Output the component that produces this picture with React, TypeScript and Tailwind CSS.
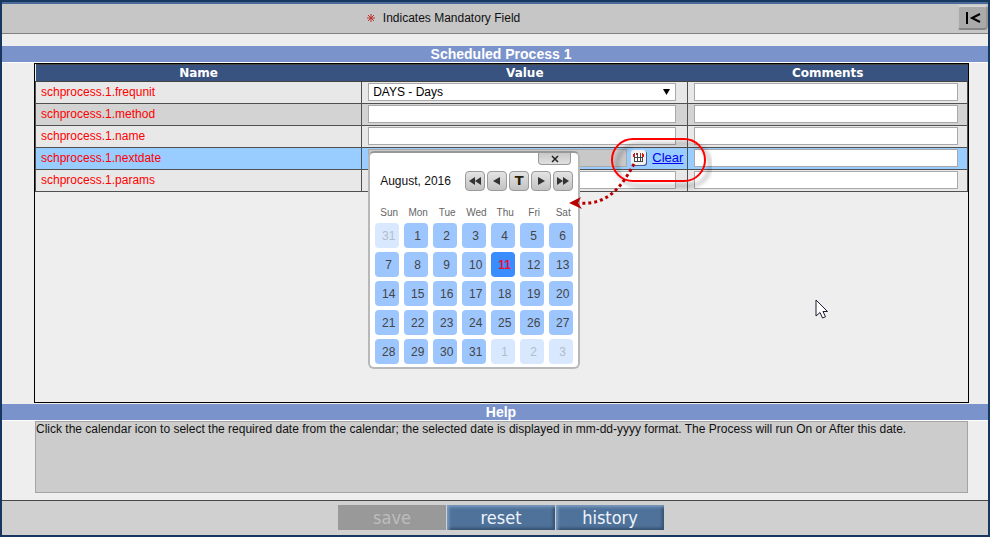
import { useState } from "react";

const rows = [
  { name: "schprocess.1.frequnit", type: "select", bg: "bg-[#e8e8e8]" },
  { name: "schprocess.1.method", type: "text", bg: "bg-[#d3d3d3]" },
  { name: "schprocess.1.name", type: "text", bg: "bg-[#e8e8e8]" },
  { name: "schprocess.1.nextdate", type: "date", bg: "bg-[#99ccff]" },
  { name: "schprocess.1.params", type: "text", bg: "bg-[#e8e8e8]" },
];

const weekdays = ["Sun", "Mon", "Tue", "Wed", "Thu", "Fri", "Sat"];

// August 2016, padded with the neighbouring months
const days = Array.from({ length: 35 }, (_, i) => {
  if (i === 0) return { key: i, day: 31, outside: true };
  if (i > 31) return { key: i, day: i - 31, outside: true };
  return { key: i, day: i, outside: false };
});

const field = "block h-[18px] w-full rounded-none border border-[#a9a9a9] bg-white px-1 text-xs text-black";
const navButton =
  "flex size-5 items-center justify-center rounded border border-[#9b9b9b] bg-linear-to-b from-[#e4e4e4] to-[#c2c2c2]";

function SectionTitle({ children }: { children: string }) {
  return (
    <h2 className="border-b border-white bg-[#7b93cb] pr-5 pl-8 text-center text-sm leading-4 font-bold text-white">
      {children}
    </h2>
  );
}

function CalendarIcon() {
  return (
    <svg viewBox="0 0 16 16" className="size-4">
      <rect x="1" y="1" width="15" height="15" rx="3" fill="#3f5f95" />
      <rect x="0" y="0" width="15" height="15" rx="3" fill="#f4f0f0" />
      <path d="M3 3h9v9H3z" fill="#fff" />
      <path d="M3.5 3v9M6.500 3v9M9.500 3v9M11.500 3v9M3 7.500h9M3 11.500h9" stroke="#444" fill="none" />
      <path d="M2 4h2v3H2zM5 3h1v2H5zM9 3h1v2H9zM11 4h2v3h-2z" fill="#d81818" />
    </svg>
  );
}

function Calendar() {
  const [selected, setSelected] = useState(11);

  return (
    <div
      role="dialog"
      aria-label="Select date"
      className="absolute top-[2px] left-0 z-10 w-[212px] rounded-md border-2 border-[#b8b8b8] border-t-[#989898] bg-white px-[5px] pb-[3px]"
    >
      <div className="flex justify-end pr-[2px]">
        <button
          type="button"
          aria-label="Close"
          className="flex h-3 w-[33px] items-center justify-center rounded-b border border-t-0 border-[#999] bg-linear-to-b from-[#c8c8c8] to-[#e0e0e0]"
        >
          <svg viewBox="0 0 8 8" className="size-2">
            <path d="M1 1l6 6M7 1L1 7" stroke="#222" strokeWidth="1.5" />
          </svg>
        </button>
      </div>

      <div className="mt-[6px] flex h-5 items-center justify-between pl-[5px]">
        <span className="text-xs text-[#111]">August, 2016</span>
        <div className="flex gap-[2px]">
          <button type="button" aria-label="Previous year" className={navButton}>
            <svg viewBox="0 0 14 10" className="h-[10px] w-[14px]" fill="#333">
              <path d="M7 1v8L1 5zM13 1v8L7 5z" />
            </svg>
          </button>
          <button type="button" aria-label="Previous month" className={navButton}>
            <svg viewBox="0 0 14 10" className="h-[10px] w-[14px]" fill="#333">
              <path d="M10 1v8L3 5z" />
            </svg>
          </button>
          <button type="button" aria-label="Today" className={navButton}>
            <span className="font-['DejaVu_Sans'] text-[13px] leading-4 font-bold text-[#2a2208]">T</span>
          </button>
          <button type="button" aria-label="Next month" className={navButton}>
            <svg viewBox="0 0 14 10" className="h-[10px] w-[14px]" fill="#333">
              <path d="M4 1v8l7-4z" />
            </svg>
          </button>
          <button type="button" aria-label="Next year" className={navButton}>
            <svg viewBox="0 0 14 10" className="h-[10px] w-[14px]" fill="#333">
              <path d="M1 1v8l6-4zM7 1v8l6-4z" />
            </svg>
          </button>
        </div>
      </div>

      <div className="mt-[15px] mb-[3px] grid grid-cols-7 gap-x-[5px] text-center text-[10px] leading-[14px] text-[#666]">
        {weekdays.map((w) => (
          <span key={w} className="pl-1">
            {w}
          </span>
        ))}
      </div>

      <div className="grid grid-cols-7 gap-x-[5px] gap-y-1">
        {days.map((d) => {
          let tone = "bg-[#9dc6ff] text-[#444]";
          if (d.outside) tone = "bg-[#d8e8ff] text-[#b4bcc8]";
          else if (d.day === selected) tone = "bg-[#3a8dff] font-bold text-[#f01030]";
          return (
            <button
              key={d.key}
              type="button"
              onClick={() => !d.outside && setSelected(d.day)}
              className={`h-[25px] rounded pl-[3px] text-center text-xs ${tone}`}
            >
              {d.day}
            </button>
          );
        })}
      </div>
    </div>
  );
}

// Callout ring round the date controls, with the dotted arrow to the calendar
function Callout() {
  return (
    <svg
      viewBox="0 0 150 86"
      className="pointer-events-none absolute -top-[19px] -right-[29px] z-20 h-[86px] w-[150px]"
      fill="none"
    >
      <defs>
        <filter id="ring-shadow" x="-20%" y="-20%" width="150%" height="160%">
          <feDropShadow dx="5" dy="5" stdDeviation="2" floodColor="#000" floodOpacity="0.4" />
        </filter>
      </defs>
      <rect x="50" y="9" width="93" height="42" rx="21" stroke="#ff0000" strokeWidth="2" filter="url(#ring-shadow)" />
      <path d="M72 34C62 52 48 76 17 73" stroke="#b80000" strokeWidth="3" strokeDasharray="3 3" />
      <path d="M7 73l12-6-3 6 4 6z" fill="#b80000" />
    </svg>
  );
}

function ValueField({ name, type }: { name: string; type: string }) {
  if (type === "select") {
    return (
      <div className="relative">
        <select aria-label={name} className={`${field} appearance-none`}>
          <option>DAYS - Days</option>
        </select>
        <svg viewBox="0 0 7 6" className="pointer-events-none absolute top-[6px] right-[6px] h-[6px] w-[7px]">
          <path d="M0 0h7L3.5 6z" fill="#000" />
        </svg>
      </div>
    );
  }
  if (type === "date") {
    return (
      <div className="relative -mr-[7px] flex h-[18px] items-center">
        <input
          aria-label={name}
          disabled
          className="h-[18px] min-w-0 flex-1 border border-[#a9a9a9] bg-[#c8c8c8] px-1 text-xs"
        />
        <button type="button" aria-label="Open calendar" className="mr-[5px] ml-1">
          <CalendarIcon />
        </button>
        <a href="#clear" className="text-[13px] text-[#0000ee] underline">
          Clear
        </a>
        <Calendar />
        <Callout />
      </div>
    );
  }
  return <input aria-label={name} type="text" className={field} />;
}

export default function App() {
  return (
    <div className="flex min-h-screen flex-col border-2 border-[#17375e] bg-[#eeeeee] font-['Liberation_Sans',Arial,sans-serif] text-xs text-black">
      <header className="flex h-8 items-center justify-between border-t-2 border-b border-t-[#4a6a9c] border-b-[#808080] bg-[#c6c6c6] pl-[37%]">
        <p className="flex items-center gap-2 pb-[2px] text-[#111]">
          <svg viewBox="0 0 8 8" className="size-2">
            <path d="M4 0v8M0 4h8M1 1l6 6M7 1L1 7" stroke="#c03028" />
          </svg>
          Indicates Mandatory Field
        </p>
        <button
          type="button"
          aria-label="Collapse"
          className="mt-px flex h-[25px] w-[31px] items-center justify-center self-start rounded border-2 border-t-[#d4d4d4] border-r-[#969696] border-b-[#858585] border-l-[#c4c4c4] bg-[#aaaaaa]"
        >
          <svg viewBox="0 0 16 14" className="h-[14px] w-4" fill="none" stroke="#000" strokeWidth="2">
            <path d="M2 1v12M15 3L7 7l8 4" />
          </svg>
        </button>
      </header>

      <main className="flex flex-1 flex-col pt-3">
        <SectionTitle>Scheduled Process 1</SectionTitle>

        <div className="relative mr-[19px] mb-px ml-8 flex-1 border border-black">
          <table className="w-full table-fixed border-collapse">
            <colgroup>
              <col className="w-[35%]" />
              <col className="w-[35%]" />
              <col className="w-[30%]" />
            </colgroup>
            <thead>
              <tr className="bg-[#38537f] font-['DejaVu_Sans',Verdana,sans-serif] text-xs leading-4 text-white">
                <th className="border-y border-[#444] p-0">Name</th>
                <th className="border-y border-[#444] p-0">Value</th>
                <th className="border-y border-[#444] p-0">Comments</th>
              </tr>
            </thead>
            <tbody>
              {rows.map((row) => (
                <tr key={row.name} className={row.bg}>
                  <td className="border border-[#505050] pt-0 pb-[2px] pl-[5px] leading-4 text-[#ff0000]">{row.name}</td>
                  <td className="border border-[#505050] pt-px pr-[11px] pb-[2px] pl-[6px]">
                    <ValueField name={row.name} type={row.type} />
                  </td>
                  <td className="border border-[#505050] pt-px pr-[9px] pb-[2px] pl-[6px]">
                    <input aria-label={`${row.name} comments`} type="text" className={field} />
                  </td>
                </tr>
              ))}
            </tbody>
          </table>

          {/* Mouse pointer */}
          <svg viewBox="0 0 13 21" className="pointer-events-none absolute right-[140px] bottom-[82px] h-[21px] w-[13px]">
            <path d="M1 1v16l4-3.500 2.500 5.500 3-1.200L8 12.500h4.500z" fill="#fff" stroke="#1c1c30" />
          </svg>
        </div>

        <SectionTitle>Help</SectionTitle>
        <div className="mr-5 ml-[33px] h-[72px] border border-[#a4a4a4] bg-[#cccccc] leading-[14px] text-[#111]">
          Click the calendar icon to select the required date from the calendar; the selected date is displayed in
          mm-dd-yyyy format. The Process will run On or After this date.
        </div>
      </main>

      <footer className="mt-[7px] flex justify-center gap-px border-t border-[#484848] bg-[#d0d0d0] pt-1 pr-5 pb-[5px] pl-8 font-['DejaVu_Sans_Condensed','DejaVu_Sans',Tahoma,sans-serif] text-lg leading-[25px] text-[#eef4fb]">
        <button type="button" disabled className="h-[25px] w-[108px] bg-[#999999] text-[#bdbdbd]">
          save
        </button>
        <button
          type="button"
          className="h-[25px] w-[108px] bg-[#4f729b] inset-shadow-[2px_2px_3px_#7d9dc0,-2px_-2px_3px_#34506f]"
        >
          reset
        </button>
        <button
          type="button"
          className="h-[25px] w-[108px] bg-[#4f729b] inset-shadow-[2px_2px_3px_#7d9dc0,-2px_-2px_3px_#34506f]"
        >
          history
        </button>
      </footer>
    </div>
  );
}
